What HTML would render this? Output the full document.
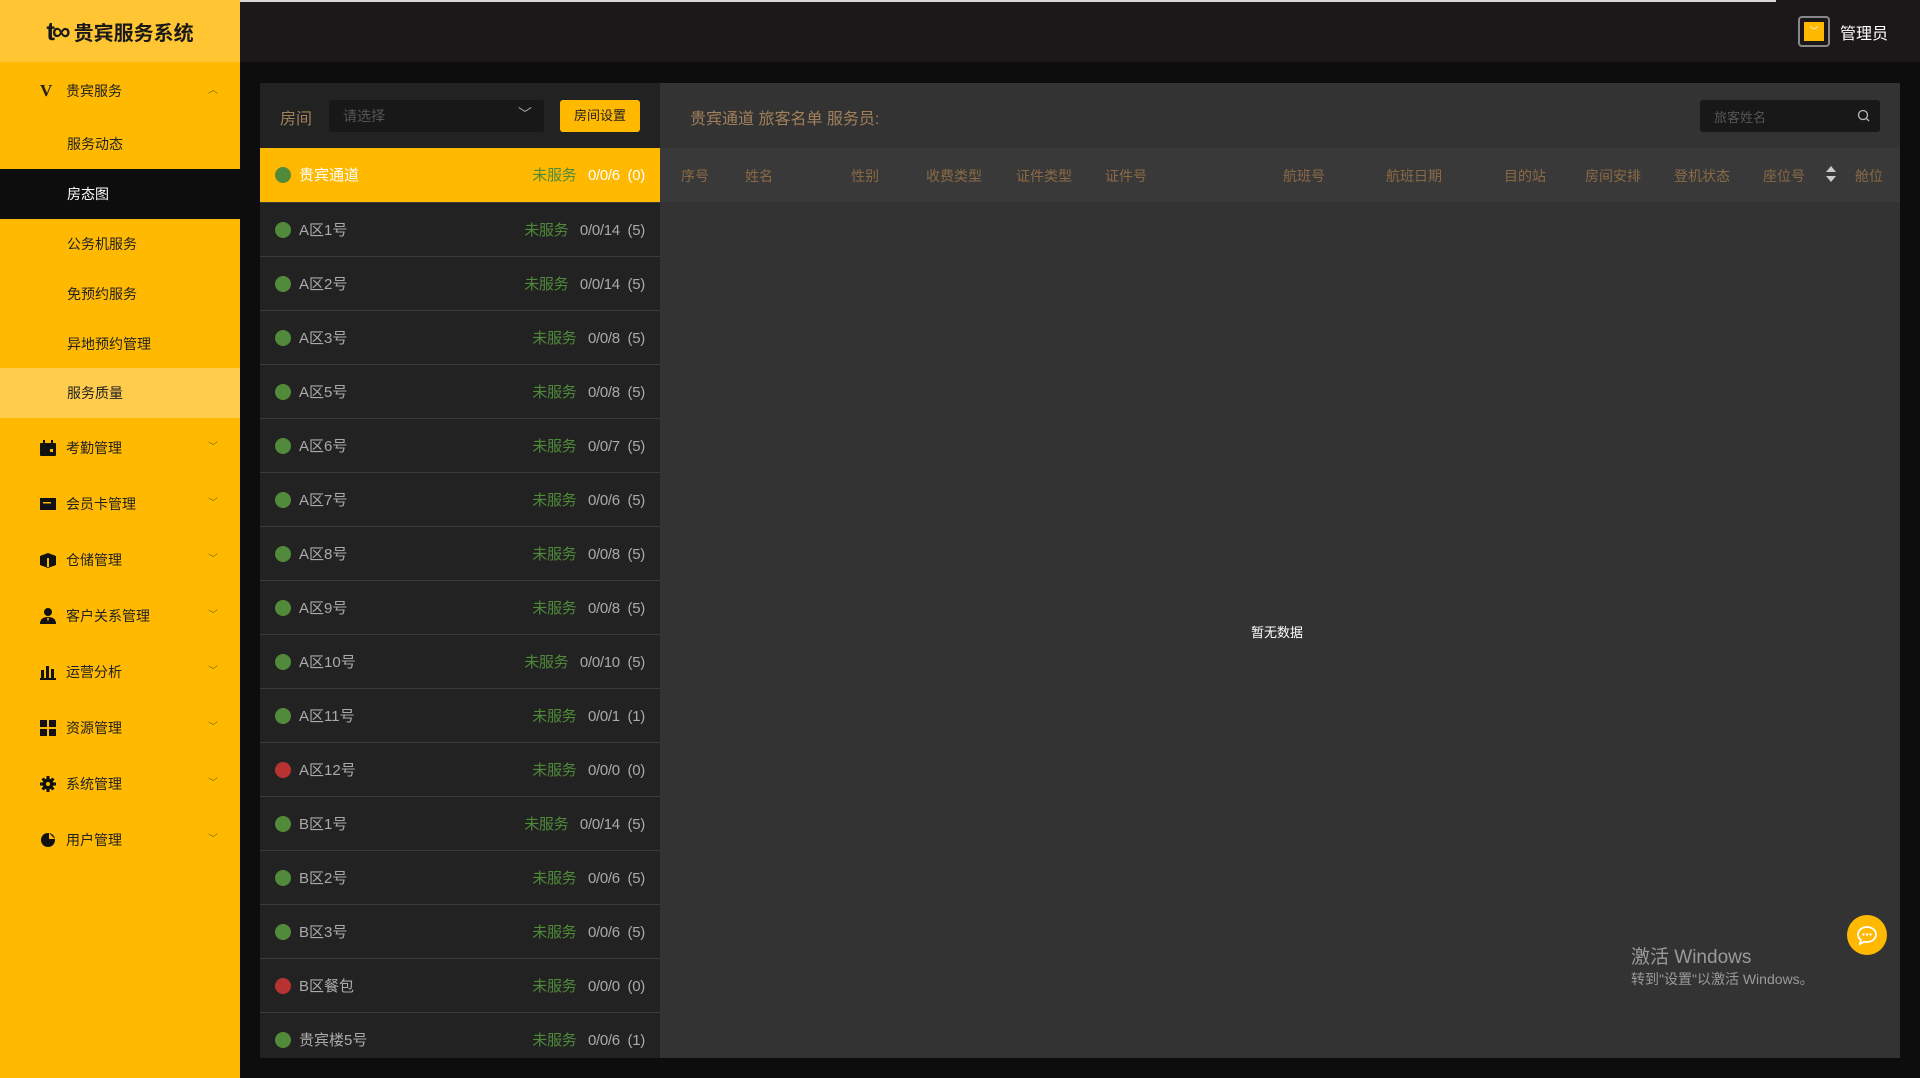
<!DOCTYPE html>
<html><head><meta charset="utf-8"><style>
*{margin:0;padding:0;box-sizing:border-box}
body{width:1920px;height:1078px;overflow:hidden;background:#0d0d0d;font-family:"Liberation Sans","Noto Sans CJK SC",sans-serif;position:relative}
.abs{position:absolute}
#top{left:0;top:0;width:1920px;height:62px;background:#1c1819}
#bar{left:143px;top:0;width:1633px;height:2px;background:#d8d8d8}
#logo{left:0;top:0;width:240px;height:62px;background:#ffc533;display:flex;align-items:center;justify-content:center;font-size:20px;font-weight:bold;color:#1a1a1a}
#side{left:0;top:62px;width:240px;height:1016px;background:#ffb900}
.mi{position:absolute;left:0;width:240px;height:50px;line-height:50px;font-size:14px;color:#222;padding-left:67px}
.grp{position:absolute;left:0;width:240px;height:56px;line-height:56px;font-size:14px;color:#222;padding-left:66px}
.ic{position:absolute;left:40px;top:20px;width:16px;height:16px}
.chev{position:absolute;right:22px;top:0;color:#8a6a00;font-size:10px}
#rooms{left:260px;top:83px;width:400px;height:975px;background:#222;overflow:hidden}
#right{left:660px;top:83px;width:1240px;height:975px;background:#333}
.row{position:absolute;left:0;width:400px;height:54px;border-top:1px solid #3b3b3b;font-size:15px;color:#aaa}
.dot{position:absolute;left:15px;top:19px;width:16px;height:16px;border-radius:50%;background:#528a3c}
.nm{position:absolute;left:39px;top:16px}
.st{position:absolute;right:15px;top:16px;white-space:pre;letter-spacing:-0.3px}
.st span{color:#4f8a3a}
.th{position:absolute;top:166px;font-size:14px;color:#8a6a45}
</style></head><body>
<div class="abs" id="top"></div>
<div class="abs" id="bar"></div>
<div class="abs" id="logo"><span style="font-family:'Liberation Sans';font-weight:900;font-size:26px;margin-right:6px;letter-spacing:-3px">t∞</span>贵宾服务系统</div>
<div class="abs" id="side">
 <div class="grp" style="top:1px">贵宾服务<span style="position:absolute;left:40px;font-weight:bold;font-size:17px;font-family:'Liberation Serif'">V</span><span class="chev">︿</span></div>
 <div class="mi" style="top:57px">服务动态</div>
 <div class="mi" style="top:107px;background:#0d0d0d;color:#fff">房态图</div>
 <div class="mi" style="top:157px">公务机服务</div>
 <div class="mi" style="top:207px">免预约服务</div>
 <div class="mi" style="top:257px">异地预约管理</div>
 <div class="mi" style="top:306px;background:#ffcc4d">服务质量</div>
 <div class="grp" style="top:358px"><svg class="ic" viewBox="0 0 16 16"><rect x="0" y="3" width="16" height="13" rx="1" fill="#111"/><rect x="3" y="0" width="2" height="4" fill="#111"/><rect x="11" y="0" width="2" height="4" fill="#111"/><rect x="10" y="9" width="3" height="3" fill="#ffb900"/></svg>考勤管理<span class="chev">﹀</span></div>
 <div class="grp" style="top:414px"><svg class="ic" viewBox="0 0 16 16"><rect x="0" y="2" width="16" height="12" fill="#111"/><rect x="3" y="6" width="8" height="1.5" fill="#ffb900"/></svg>会员卡管理<span class="chev">﹀</span></div>
 <div class="grp" style="top:470px"><svg class="ic" viewBox="0 0 16 16"><path d="M0 4l8-3 8 3v9l-8 3-8-3z" fill="#111"/><path d="M7 6h2v9H7z" fill="#ffb900"/></svg>仓储管理<span class="chev">﹀</span></div>
 <div class="grp" style="top:526px"><svg class="ic" viewBox="0 0 16 16"><circle cx="8" cy="4" r="4" fill="#111"/><path d="M0 16q0-7 8-7t8 7z" fill="#111"/><path d="M7 10h2l-1 4z" fill="#ffb900"/></svg>客户关系管理<span class="chev">﹀</span></div>
 <div class="grp" style="top:582px"><svg class="ic" viewBox="0 0 16 16"><rect x="1" y="6" width="3" height="8" fill="#111"/><rect x="6" y="2" width="3" height="12" fill="#111"/><rect x="11" y="5" width="3" height="9" fill="#111"/><rect x="0" y="14" width="16" height="2" fill="#111"/></svg>运营分析<span class="chev">﹀</span></div>
 <div class="grp" style="top:638px"><svg class="ic" viewBox="0 0 16 16"><rect x="0" y="0" width="7" height="7" fill="#111"/><rect x="9" y="0" width="7" height="7" fill="#111"/><rect x="0" y="9" width="7" height="7" fill="#111"/><rect x="9" y="9" width="7" height="7" fill="#111"/></svg>资源管理<span class="chev">﹀</span></div>
 <div class="grp" style="top:694px"><svg class="ic" viewBox="0 0 16 16"><circle cx="8" cy="8" r="5.5" fill="#111"/><g stroke="#111" stroke-width="3"><path d="M8 0v16M0 8h16M2.5 2.5l11 11M13.5 2.5l-11 11"/></g><circle cx="8" cy="8" r="2" fill="#ffb900"/></svg>系统管理<span class="chev">﹀</span></div>
 <div class="grp" style="top:750px"><svg class="ic" viewBox="0 0 16 16"><circle cx="8" cy="8" r="7" fill="#111"/><path d="M9 1v6h6" fill="#ffb900"/></svg>用户管理<span class="chev">﹀</span></div>
</div>
<div class="abs" style="left:1798px;top:16px;width:32px;height:31px;border:2px solid #888;border-radius:4px;background:#1c1819"><div style="margin:4px;width:20px;height:19px;background:#ffb900;color:#fff;font-size:9px;text-align:center;line-height:19px">﹀</div></div>
<div class="abs" style="left:1840px;top:20px;color:#fff;font-size:16px">管理员</div>

<div class="abs" id="rooms">
 <div class="abs" style="left:20px;top:22px;font-size:16px;color:#a0805a">房间</div>
 <div class="abs" style="left:69px;top:17px;width:215px;height:32px;background:#181818;border-radius:3px;color:#555;font-size:14px;padding:6px 14px">请选择<span style="position:absolute;right:12px;top:4px;color:#aaa">﹀</span></div>
 <div class="abs" style="left:300px;top:17px;width:80px;height:32px;background:#ffb900;border-radius:3px;color:#222;font-size:13px;text-align:center;line-height:32px">房间设置</div>
 <div class="row" style="top:65px;background:#ffb900;border-top:none"><div class="dot"></div><div class="nm" style="color:#fff">贵宾通道</div><div class="st" style="color:#fff"><span>未服务</span>   0/0/6  (0)</div></div>
 <div class="row" style="top:119px"><div class="dot"></div><div class="nm">A区1号</div><div class="st"><span>未服务</span>   0/0/14  (5)</div></div>
 <div class="row" style="top:173px"><div class="dot"></div><div class="nm">A区2号</div><div class="st"><span>未服务</span>   0/0/14  (5)</div></div>
 <div class="row" style="top:227px"><div class="dot"></div><div class="nm">A区3号</div><div class="st"><span>未服务</span>   0/0/8  (5)</div></div>
 <div class="row" style="top:281px"><div class="dot"></div><div class="nm">A区5号</div><div class="st"><span>未服务</span>   0/0/8  (5)</div></div>
 <div class="row" style="top:335px"><div class="dot"></div><div class="nm">A区6号</div><div class="st"><span>未服务</span>   0/0/7  (5)</div></div>
 <div class="row" style="top:389px"><div class="dot"></div><div class="nm">A区7号</div><div class="st"><span>未服务</span>   0/0/6  (5)</div></div>
 <div class="row" style="top:443px"><div class="dot"></div><div class="nm">A区8号</div><div class="st"><span>未服务</span>   0/0/8  (5)</div></div>
 <div class="row" style="top:497px"><div class="dot"></div><div class="nm">A区9号</div><div class="st"><span>未服务</span>   0/0/8  (5)</div></div>
 <div class="row" style="top:551px"><div class="dot"></div><div class="nm">A区10号</div><div class="st"><span>未服务</span>   0/0/10  (5)</div></div>
 <div class="row" style="top:605px"><div class="dot"></div><div class="nm">A区11号</div><div class="st"><span>未服务</span>   0/0/1  (1)</div></div>
 <div class="row" style="top:659px"><div class="dot" style="background:#b83232"></div><div class="nm">A区12号</div><div class="st"><span>未服务</span>   0/0/0  (0)</div></div>
 <div class="row" style="top:713px"><div class="dot"></div><div class="nm">B区1号</div><div class="st"><span>未服务</span>   0/0/14  (5)</div></div>
 <div class="row" style="top:767px"><div class="dot"></div><div class="nm">B区2号</div><div class="st"><span>未服务</span>   0/0/6  (5)</div></div>
 <div class="row" style="top:821px"><div class="dot"></div><div class="nm">B区3号</div><div class="st"><span>未服务</span>   0/0/6  (5)</div></div>
 <div class="row" style="top:875px"><div class="dot" style="background:#b83232"></div><div class="nm">B区餐包</div><div class="st"><span>未服务</span>   0/0/0  (0)</div></div>
 <div class="row" style="top:929px"><div class="dot"></div><div class="nm">贵宾楼5号</div><div class="st"><span>未服务</span>   0/0/6  (1)</div></div>
</div>

<div class="abs" id="right">
 <div class="abs" style="left:30px;top:22px;font-size:16px;color:#a0805a">贵宾通道 旅客名单  服务员:</div>
 <div class="abs" style="left:1040px;top:17px;width:180px;height:32px;background:#181818;border-radius:3px;color:#555;font-size:13px;padding:7px 14px">旅客姓名<svg style="position:absolute;right:10px;top:9px" width="13" height="13" viewBox="0 0 13 13"><circle cx="6" cy="6" r="4.5" fill="none" stroke="#bbb" stroke-width="1.3"/><path d="M9.5 9.5l2.5 2.5" stroke="#bbb" stroke-width="1.3"/></svg></div>
 <div class="abs" style="left:0;top:65px;width:1240px;height:54px;background:#393939"></div>
</div>
<div class="abs th" style="left:681px">序号</div>
<div class="abs th" style="left:745px">姓名</div>
<div class="abs th" style="left:851px">性别</div>
<div class="abs th" style="left:926px">收费类型</div>
<div class="abs th" style="left:1016px">证件类型</div>
<div class="abs th" style="left:1105px">证件号</div>
<div class="abs th" style="left:1283px">航班号</div>
<div class="abs th" style="left:1386px">航班日期</div>
<div class="abs th" style="left:1504px">目的站</div>
<div class="abs th" style="left:1585px">房间安排</div>
<div class="abs th" style="left:1674px">登机状态</div>
<div class="abs th" style="left:1763px">座位号</div>
<svg class="abs" style="left:1825px;top:165px" width="12" height="18" viewBox="0 0 12 18"><path d="M6 1l5 6H1z M6 17l5-6H1z" fill="#ccc"/></svg>
<div class="abs th" style="left:1855px">舱位</div>
<div class="abs" style="left:1251px;top:622px;color:#fff;font-size:13px">暂无数据</div>
<div class="abs" style="left:1847px;top:915px;width:40px;height:40px;border-radius:50%;background:#ffb900"><svg width="40" height="40" viewBox="0 0 40 40"><path d="M20 12c-5 0-9 3.3-9 7.5 0 2.2 1.1 4.1 2.9 5.5L13 29l4.3-2.3c.9.2 1.8.3 2.7.3 5 0 9-3.3 9-7.5S25 12 20 12z" fill="none" stroke="#fff" stroke-width="1.8"/><circle cx="16.5" cy="19.5" r="1.2" fill="#fff"/><circle cx="20" cy="19.5" r="1.2" fill="#fff"/><circle cx="23.5" cy="19.5" r="1.2" fill="#fff"/></svg></div>
<div class="abs" style="left:1631px;top:942px;color:#9a9a9a;font-size:19px">激活 Windows</div>
<div class="abs" style="left:1631px;top:969px;color:#9a9a9a;font-size:14px">转到"设置"以激活 Windows。</div>
</body></html>
